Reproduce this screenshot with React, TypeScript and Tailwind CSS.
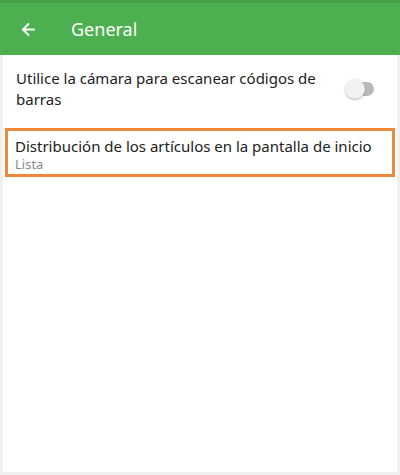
import { ArrowLeft } from "lucide-react";

export default function App() {
  return (
    <div className="flex h-[475px] w-[400px] flex-col bg-[#f0f0f0] px-[3px] pb-[3px] font-['Noto_Sans','Open_Sans',sans-serif]">
      <header className="-mx-[3px] flex h-[55px] items-center border-t-[3px] border-[#45a049] bg-[#4caf50] text-white">
        <ArrowLeft className="ml-[19px] h-[19px] w-[19px]" strokeWidth={2.4} />
        <h1 className="ml-[33px] text-[18px] leading-none">General</h1>
      </header>
      <main className="flex flex-1 flex-col bg-white">
        <div className="flex items-center justify-between pl-[13px] pr-[24px] pt-[13px] pb-[18px]">
          <p className="w-[340px] text-[15px] leading-[21px] text-[#222]">
            Utilice la cámara para escanear códigos de barras
          </p>
          <div className="relative h-[14px] w-[28px]">
            <div className="absolute left-[6px] top-0 h-[14px] w-[22px] rounded-full bg-[#b9b9b9]" />
            <div className="absolute -left-[1px] -top-[3px] h-[20px] w-[20px] rounded-full bg-[#f1f1f1] shadow-[0_1px_2px_rgba(0,0,0,0.3)]" />
          </div>
        </div>
        <div className="mx-[2px] border-[3px] border-[#f0883a] px-[7px] pt-[5px] pb-[2px]">
          <p className="text-[15px] leading-[20px] text-[#222]">
            Distribución de los artículos en la pantalla de inicio
          </p>
          <p className="text-[13px] leading-[16px] text-[#8a8a8a]">Lista</p>
        </div>
      </main>
    </div>
  );
}
